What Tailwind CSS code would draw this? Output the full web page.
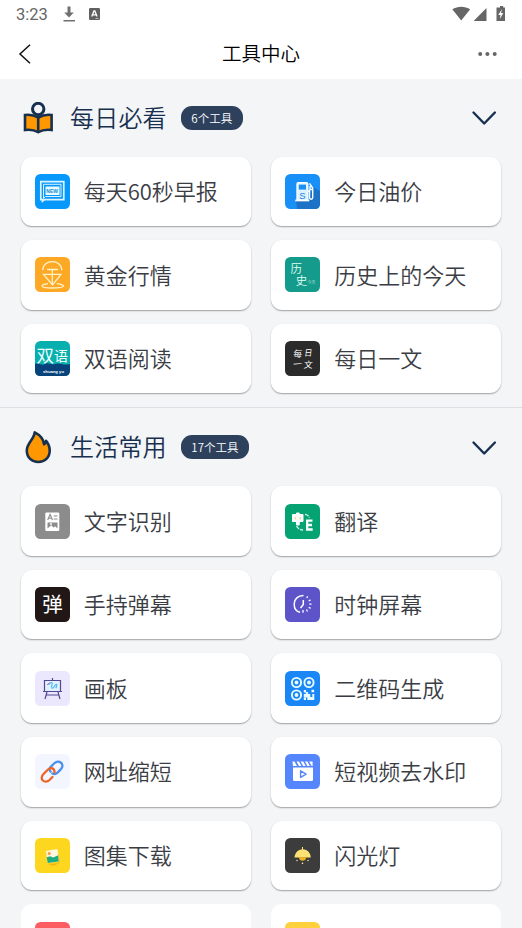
<!DOCTYPE html>
<html lang="zh-CN">
<head>
<meta charset="utf-8">
<title>工具中心</title>
<script src="https://cdn.jsdelivr.net/npm/@tailwindcss/browser@4"></script>
</head>
<body class="h-[928px] w-[522px] overflow-hidden bg-[#f3f5f7] font-['Noto_Sans_CJK_SC',sans-serif] font-[350] text-[#3b3d44]">
<header class="h-[79px] bg-white">
  <div class="flex h-7 items-center justify-between pl-4 pr-[17px] text-[#666]">
    <div class="flex items-center">
      <span class="w-[46px] pt-px font-[Roboto,sans-serif] text-[16.5px] font-normal leading-7">3:23</span>
      <svg class="h-[18px] w-[14px]" viewBox="0 0 14 18" fill="#707070"><path d="M5.500 1.500h3v6h3.300L7 12.500 2.200 7.500h3.300zM1.500 15h11.500v1.600H1.500z"/></svg>
      <svg class="ml-[13px] h-3 w-[11px]" viewBox="0 0 11 12"><rect width="11" height="12" rx="1.300" fill="#606060"/><path d="M2.700 8.500 5 3h.8l2.300 5.500M3.700 6.800h3.500" stroke="#fff" stroke-width="1.300" fill="none"/><path d="M6.500 10.500h3" stroke="#ddd" stroke-width=".7"/></svg>
    </div>
    <svg class="h-4 w-[53px]" viewBox="0 0 53 16" fill="#666"><path d="M.3 3.300C5.500-.2 13-.2 18.200 3.300L9.200 14.500zM34.500 2v13H21.600zM46 1.500h2V0h3.200v1.500H53V15h-8.500V1.500z"/><path d="m50 3-3.800 6h2.300l-.6 4 3.400-6H49z" fill="#fff"/></svg>
  </div>
  <div class="grid h-[51px] grid-cols-[1fr_auto_1fr] items-center px-[18px]">
    <svg class="h-5 w-[14px]" viewBox="0 0 14 20" fill="none" stroke="#111" stroke-width="1.500"><path d="M12 .8 2 10l10 9.200"/></svg>
    <h1 class="-mt-0.5 text-[19.5px] leading-[50px] text-black">工具中心</h1>
    <svg class="mr-[7px] h-1 w-[19px] justify-self-end" viewBox="0 0 19 4" fill="#666"><circle cx="2.200" cy="2" r="2"/><circle cx="9.400" cy="2" r="2"/><circle cx="16.700" cy="2" r="2"/></svg>
  </div>
</header>

<main>
<section class="h-[329px] border-b border-[#dcdee2]">
  <div class="flex h-[77.5px] items-center pl-[23px] pr-[25px]">
    <svg class="h-8 w-[31px]" viewBox="0 0 31 32" fill="#ff9800" stroke="#17304f" stroke-width="2.600"><path d="M2 13c5-.6 9.500.3 13.200 2.500C19 13.300 23.500 12.400 28.600 13v15c-5-.7-9.500 0-13.400 2.200C11.300 28 7 27.300 2 28z"/><path d="M15.200 15.500v14"/><circle cx="15.200" cy="7" r="5.700" fill="#f3f5f7" stroke-width="3"/></svg>
    <h2 class="-mt-0.5 ml-4 text-[24px] leading-8 tracking-[0.2px] text-[#17304f]">每日必看</h2>
    <span class="ml-[14px] h-6 rounded-[11px] bg-[#2d405c] px-[10.500px] text-[11.500px] leading-6 text-white">6个工具</span>
    <svg class="ml-auto mt-px h-4 w-[26px]" viewBox="0 0 26 16" fill="none" stroke="#17304f" stroke-width="2.400" stroke-linecap="round" stroke-linejoin="round"><path d="m2.500 2.500 10.700 11 10.700-11"/></svg>
  </div>
  <div class="grid grid-cols-2 gap-x-[20.600px] gap-y-[14px] px-[20.700px]">
    <div class="flex h-[69.600px] items-center gap-[14px] rounded-[11px] bg-white pl-[14px] shadow-[0_1px_1.500px_rgba(0,0,0,0.35)]">
      <svg class="h-[35px] w-[35px] shrink-0" viewBox="0 0 35 35"><rect width="35" height="35" rx="5.500" fill="#0698fb"/><path d="M5.800 7.700h23v18H9.500l-2 1.600v-1.600H5.800z" fill="none" stroke="#d9f3ff" stroke-width="1.700"/><path d="M8.500 10.300H26v12.200H10.500l-2 2z" fill="none" stroke="#d9f3ff" stroke-width="1"/><path d="M10.500 12.500h14v8.500h-14z" fill="#e8fbff"/><text x="11.300" y="18.500" font-family="Liberation Sans, sans-serif" font-size="5" font-weight="700" fill="#168bd0">NEW</text></svg>
      <span class="-mt-0.5 text-[22px] leading-8">每天60秒早报</span>
    </div>
    <div class="flex h-[69.600px] items-center gap-[14px] rounded-[11px] bg-white pl-[14px] shadow-[0_1px_1.500px_rgba(0,0,0,0.35)]">
      <svg class="h-[35px] w-[35px] shrink-0" viewBox="0 0 35 35"><rect width="35" height="35" rx="5.500" fill="#1890f7"/><path d="M11 27h12l5-14 7 4v13q0 5-5 5H12z" fill="#1b72c6"/><path d="M12 26V10q0-1.300 1.300-1.300h8.200q1.300 0 1.300 1.300v16" fill="#dff3ff" stroke="#fff" stroke-width="1.300"/><path d="M13.800 10.600H21v5h-7.200z" fill="#1890f7"/><path d="M10.300 26.500h14" stroke="#fff" stroke-width="1.700"/><path d="M23 17h1.500v6.500q0 1.700 1.600 1.700t1.600-1.700V14l-3.200-4.700M25 12v3.500h2.700" fill="none" stroke="#fff" stroke-width="1.400"/><text x="14.300" y="25.200" font-family="Liberation Sans, sans-serif" font-size="9.500" fill="#1680db">S</text></svg>
      <span class="-mt-0.5 text-[22px] leading-8">今日油价</span>
    </div>
    <div class="flex h-[69.600px] items-center gap-[14px] rounded-[11px] bg-white pl-[14px] shadow-[0_1px_1.500px_rgba(0,0,0,0.35)]">
      <svg class="h-[35px] w-[35px] shrink-0" viewBox="0 0 35 35"><rect width="35" height="35" rx="5.500" fill="#fda926"/><g fill="none" stroke="#fff3c8" stroke-width="1.300"><path d="M7.700 13.200C8 1.700 26.500 1.700 26.800 13.200M12 12.500h11M8.500 17.300h17.500L17.500 28z M17.300 12.500V28"/><path d="M13 26.700c-8 .8-9 4.300 4.500 4.300s14-3.300 4.300-4.300"/></g></svg>
      <span class="-mt-0.5 text-[22px] leading-8">黄金行情</span>
    </div>
    <div class="flex h-[69.600px] items-center gap-[14px] rounded-[11px] bg-white pl-[14px] shadow-[0_1px_1.500px_rgba(0,0,0,0.35)]">
      <svg class="h-[35px] w-[35px] shrink-0" viewBox="0 0 35 35"><rect width="35" height="35" rx="5.500" fill="#159b8b"/><g fill="#e0fff5" font-family="Noto Sans CJK SC, sans-serif"><text x="5.500" y="16.300" font-size="11.500">历</text><text x="10.800" y="27.500" font-size="11.500">史</text><text x="22.500" y="27.300" font-size="4" opacity=".75">今天</text></g></svg>
      <span class="-mt-0.5 text-[22px] leading-8">历史上的今天</span>
    </div>
    <div class="flex h-[69.600px] items-center gap-[14px] rounded-[11px] bg-white pl-[14px] shadow-[0_1px_1.500px_rgba(0,0,0,0.35)]">
      <svg class="h-[35px] w-[35px] shrink-0" viewBox="0 0 35 35"><rect width="35" height="35" rx="5.500" fill="#07afae"/><path d="M0 23c3-1.500 6 2 10 0 3-2 6 1.500 10 0 5-2 8 2 15 0v6.500q0 5.500-5.500 5.500h-24Q0 35 0 29.500z" fill="#07437a"/><g fill="#f2ffff" font-family="Noto Sans CJK SC, sans-serif" font-weight="400"><text x="1.500" y="21" font-size="17.500">双</text><text x="19" y="19.800" font-size="14">语</text></g><text x="8" y="32" font-family="Liberation Sans, sans-serif" font-size="4.200" font-weight="700" fill="#fff">shuang yu</text></svg>
      <span class="-mt-0.5 text-[22px] leading-8">双语阅读</span>
    </div>
    <div class="flex h-[69.600px] items-center gap-[14px] rounded-[11px] bg-white pl-[14px] shadow-[0_1px_1.500px_rgba(0,0,0,0.35)]">
      <svg class="h-[35px] w-[35px] shrink-0" viewBox="0 0 35 35"><rect width="35" height="35" rx="5.500" fill="#2b2b2b"/><g fill="#fff" font-family="Noto Sans CJK SC, sans-serif" font-size="8.800" font-weight="400"><text transform="translate(8 15.500) skewX(-7)">每</text><text transform="translate(19 15.200) skewX(-7) scale(.9 1)">日</text><text transform="translate(8.500 26.500) rotate(-4)">一</text><text transform="translate(18.500 26.500) skewX(-7)">文</text></g></svg>
      <span class="-mt-0.5 text-[22px] leading-8">每日一文</span>
    </div>
  </div>
</section>

<section>
  <div class="flex h-[78.300px] items-center pl-[23px] pr-[25px]">
    <svg class="h-[34px] w-[31px]" viewBox="0 0 31 34" fill="#ff9800" stroke="#17304f" stroke-width="2.600" stroke-linejoin="round"><path d="M11.700 2.300C11 9.500 3.800 13.200 3.800 20.500c0 7 5 11.500 11.500 11.500s11.400-4.500 11.400-11.500c0-4-1.100-6.700-3.600-9.700-.4 1.900-.9 2.700-2 3.500C20.500 9.200 16.500 4.700 11.700 2.300z"/></svg>
    <h2 class="-mt-0.5 ml-4 text-[24px] leading-8 tracking-[0.2px] text-[#17304f]">生活常用</h2>
    <span class="ml-[14px] h-6 rounded-[11px] bg-[#2d405c] px-[10.500px] text-[11.500px] leading-6 text-white">17个工具</span>
    <svg class="ml-auto mt-0.5 h-4 w-[26px]" viewBox="0 0 26 16" fill="none" stroke="#17304f" stroke-width="2.400" stroke-linecap="round" stroke-linejoin="round"><path d="m2.500 2.500 10.700 11 10.700-11"/></svg>
  </div>
  <div class="grid grid-cols-2 gap-x-[20.600px] gap-y-[14px] px-[20.700px]">
    <div class="flex h-[69.600px] items-center gap-[14px] rounded-[11px] bg-white pl-[14px] shadow-[0_1px_1.500px_rgba(0,0,0,0.35)]">
      <svg class="h-[35px] w-[35px] shrink-0" viewBox="0 0 35 35"><rect width="35" height="35" rx="5.500" fill="#8c8c8c"/><rect x="10.300" y="8.500" width="14" height="18.500" rx="1.200" fill="#fff"/><path d="m12.700 16 2.400-5.500 2.400 5.500M13.500 14.200h3.200M18.700 12h3.800M18.700 15h3.800" stroke="#8c8c8c" stroke-width="1.100" fill="none"/><path d="M12.500 18.500h10v6l-2.300-2.300-1.700 1.200-2.300-2.200-3.700 3.300z" fill="#8c8c8c"/><circle cx="16" cy="20" r="1" fill="#fff"/></svg>
      <span class="-mt-[3px] text-[22px] leading-8">文字识别</span>
    </div>
    <div class="flex h-[69.600px] items-center gap-[14px] rounded-[11px] bg-white pl-[14px] shadow-[0_1px_1.500px_rgba(0,0,0,0.35)]">
      <svg class="h-[35px] w-[35px] shrink-0" viewBox="0 0 35 35"><rect width="35" height="35" rx="5.500" fill="#05a272"/><path d="M11.500 9h2.700v1.500H18v7h-3.800V21h-2.700v-3.500H7.500v-7h4z" fill="#fff" stroke="#fff" stroke-linejoin="round"/><path d="M9.800 13h1.400v2.500H9.800zM14.500 13h1.400v2.500h-1.400z" fill="#efd994"/><path d="M27.500 16.700h-5.300v8.800h5.500M22.200 21h4.800" fill="none" stroke="#fff" stroke-width="2.300"/><path d="M20 10.300c2.300.3 3.700 1.400 4.300 3.300M11.500 22c1 2.200 3 3.700 6.500 4" fill="none" stroke="#d9f7e9" stroke-width="1.300" stroke-dasharray="4 1"/></svg>
      <span class="-mt-[3px] text-[22px] leading-8">翻译</span>
    </div>
    <div class="flex h-[69.600px] items-center gap-[14px] rounded-[11px] bg-white pl-[14px] shadow-[0_1px_1.500px_rgba(0,0,0,0.35)]">
      <svg class="h-[35px] w-[35px] shrink-0" viewBox="0 0 35 35"><rect width="35" height="35" rx="5.500" fill="#211716"/><text x="7.200" y="24.500" font-family="Noto Sans CJK SC, sans-serif" font-size="20.500" font-weight="400" fill="#fff">弹</text></svg>
      <span class="-mt-[3px] text-[22px] leading-8">手持弹幕</span>
    </div>
    <div class="flex h-[69.600px] items-center gap-[14px] rounded-[11px] bg-white pl-[14px] shadow-[0_1px_1.500px_rgba(0,0,0,0.35)]">
      <svg class="h-[35px] w-[35px] shrink-0" viewBox="0 0 35 35"><rect width="35" height="35" rx="5.500" fill="#5d54c9"/><g fill="none" stroke="#fff" stroke-width="1.500"><path d="M18.500 8.500c-5.500 0-9.300 3.600-9.300 8.400 0 4.500 2.500 7.700 5.800 8.300"/><path d="M18.300 13v4.500L15.500 21"/><path d="m21.700 11 1-1.700M23.700 14l1.800-1.100M24.300 17.200h2.200M23.700 20.300l1.900 1.100M21.500 22.500l1 2M18 23v2.700" stroke-width="1.300"/></g></svg>
      <span class="-mt-[3px] text-[22px] leading-8">时钟屏幕</span>
    </div>
    <div class="flex h-[69.600px] items-center gap-[14px] rounded-[11px] bg-white pl-[14px] shadow-[0_1px_1.500px_rgba(0,0,0,0.35)]">
      <svg class="h-[35px] w-[35px] shrink-0" viewBox="0 0 35 35"><rect width="35" height="35" rx="5.500" fill="#ebe8fe"/><path d="M9.500 9.500h16v11h-16z" fill="#e1f2ff"/><g fill="none" stroke="#514795" stroke-width="1.200"><path d="M9.500 9.500h16v11h-16zM8 20.500h19M17.500 7v2.500M12 21l-2 7M23 21l2 7M11.500 24h12"/></g><path d="M13.500 14c2-3 4.500-3.500 3.500-.5-1.300 4 .5 5 2.300 2 2.300-3.600 3.500-2.500 1.500 1.800" fill="none" stroke="#50baf0" stroke-width="1.200"/><path d="m12 14 2.500-2.500" stroke="#e65ca4"/></svg>
      <span class="-mt-[3px] text-[22px] leading-8">画板</span>
    </div>
    <div class="flex h-[69.600px] items-center gap-[14px] rounded-[11px] bg-white pl-[14px] shadow-[0_1px_1.500px_rgba(0,0,0,0.35)]">
      <svg class="h-[35px] w-[35px] shrink-0" viewBox="0 0 35 35"><rect width="35" height="35" rx="5.500" fill="#1b87f7"/><g fill="none" stroke="#e7fcff" stroke-width="1.900"><circle cx="11.500" cy="11.500" r="4.600"/><circle cx="24" cy="11.500" r="4.600"/><circle cx="11.500" cy="24" r="4.600"/></g><g fill="#e7fcff"><circle cx="11.500" cy="11.500" r="1.900"/><circle cx="24" cy="11.500" r="1.900"/><circle cx="11.500" cy="24" r="1.900"/><path d="M18.800 19h2.300v2h2v2h2.200v3h2v-3h2v6h-7v-2.500h-3.500V23h2v-1.500h-2zM26.500 18.700h2.600v2.600h-2.600zM18.800 26.700h2.200V29h-2.200z"/></g></svg>
      <span class="-mt-[3px] text-[22px] leading-8">二维码生成</span>
    </div>
    <div class="flex h-[69.600px] items-center gap-[14px] rounded-[11px] bg-white pl-[14px] shadow-[0_1px_1.500px_rgba(0,0,0,0.35)]">
      <svg class="h-[35px] w-[35px] shrink-0" viewBox="0 0 35 35"><rect width="35" height="35" rx="5.500" fill="#f3f6ff"/><g fill="none" stroke-width="2.300" stroke-linecap="round"><path d="m15.500 17.500-.7-1c-.7-1.200-.2-2.500.7-3.400l3.500-3.600c5-4.500 11.300.6 7 5.600l-3.500 3.500c-1.500 1.500-3.500 1.700-5.200.9" stroke="#4a91ef"/><path d="M19.500 18.500c.3-4.500-3.800-5.500-6.500-3L8.500 20c-5 5 1.300 10.300 6 6l3-3" stroke="#ef6226"/></g></svg>
      <span class="-mt-[3px] text-[22px] leading-8">网址缩短</span>
    </div>
    <div class="flex h-[69.600px] items-center gap-[14px] rounded-[11px] bg-white pl-[14px] shadow-[0_1px_1.500px_rgba(0,0,0,0.35)]">
      <svg class="h-[35px] w-[35px] shrink-0" viewBox="0 0 35 35"><rect width="35" height="35" rx="5.500" fill="#5686fe"/><path d="M8 13.500h20v12q0 1.500-1.500 1.500h-17Q8 27 8 25.500z" fill="#fff"/><path d="M7.500 7.500h2l2.500 4.500H8zM11.500 7.500h2.500l2.500 4.500H14zM15.700 7.500h2.500l2.500 4.500h-2.500zM19.900 7.500h2.500l2.500 4.500h-2.500zM24.100 7.500h3.500V12h-1z" fill="#fff"/><path d="m15.600 16.800 5.500 3.300-5.500 3.300z" fill="none" stroke="#5686fe" stroke-width="1.400" stroke-linejoin="round"/></svg>
      <span class="-mt-[3px] text-[22px] leading-8">短视频去水印</span>
    </div>
    <div class="flex h-[69.600px] items-center gap-[14px] rounded-[11px] bg-white pl-[14px] shadow-[0_1px_1.500px_rgba(0,0,0,0.35)]">
      <svg class="h-[35px] w-[35px] shrink-0" viewBox="0 0 35 35"><rect width="35" height="35" rx="5.500" fill="#fdd71f"/><path d="m13 26 10-1 1-6 .5 6-6 3z" fill="#efb817"/><path d="m11 13 11.500-2 1.200 12.500-11 1.500z" fill="#fff8df"/><path d="m11.700 19.300 3.500-1 3 1.200 5-2.200.5 6.200-11 1.500z" fill="#20ac82"/><circle cx="14.200" cy="15.500" r="1.500" fill="#ff914d"/></svg>
      <span class="-mt-[3px] text-[22px] leading-8">图集下载</span>
    </div>
    <div class="flex h-[69.600px] items-center gap-[14px] rounded-[11px] bg-white pl-[14px] shadow-[0_1px_1.500px_rgba(0,0,0,0.35)]">
      <svg class="h-[35px] w-[35px] shrink-0" viewBox="0 0 35 35"><rect width="35" height="35" rx="5.500" fill="#3c3c3c"/><path d="M17.500 9v3" stroke="#ffe274"/><path d="M9.500 19.500c1-11 15.500-11 16.300 0z" fill="#ffe274"/><path d="M13.800 19.200h7.500c-.3 4.700-7.200 4.700-7.500 0z" fill="#efb421"/><g fill="#fff5bc"><circle cx="12" cy="22.500" r=".7"/><circle cx="17.500" cy="25.300" r=".8"/><circle cx="23" cy="22.500" r=".7"/></g></svg>
      <span class="-mt-[3px] text-[22px] leading-8">闪光灯</span>
    </div>
    <div class="flex h-[69.600px] items-center rounded-[11px] bg-white pl-[14px]">
      <svg class="h-[35px] w-[35px] shrink-0" viewBox="0 0 35 35"><rect width="35" height="35" rx="5.500" fill="#fc5d62"/><circle cx="17" cy="9" r="3" fill="#ffa3a0"/></svg>
    </div>
    <div class="flex h-[69.600px] items-center rounded-[11px] bg-white pl-[14px]">
      <svg class="h-[35px] w-[35px] shrink-0" viewBox="0 0 35 35"><rect width="35" height="35" rx="5.500" fill="#ffd13d"/></svg>
    </div>
  </div>
</section>
</main>
</body>
</html>
